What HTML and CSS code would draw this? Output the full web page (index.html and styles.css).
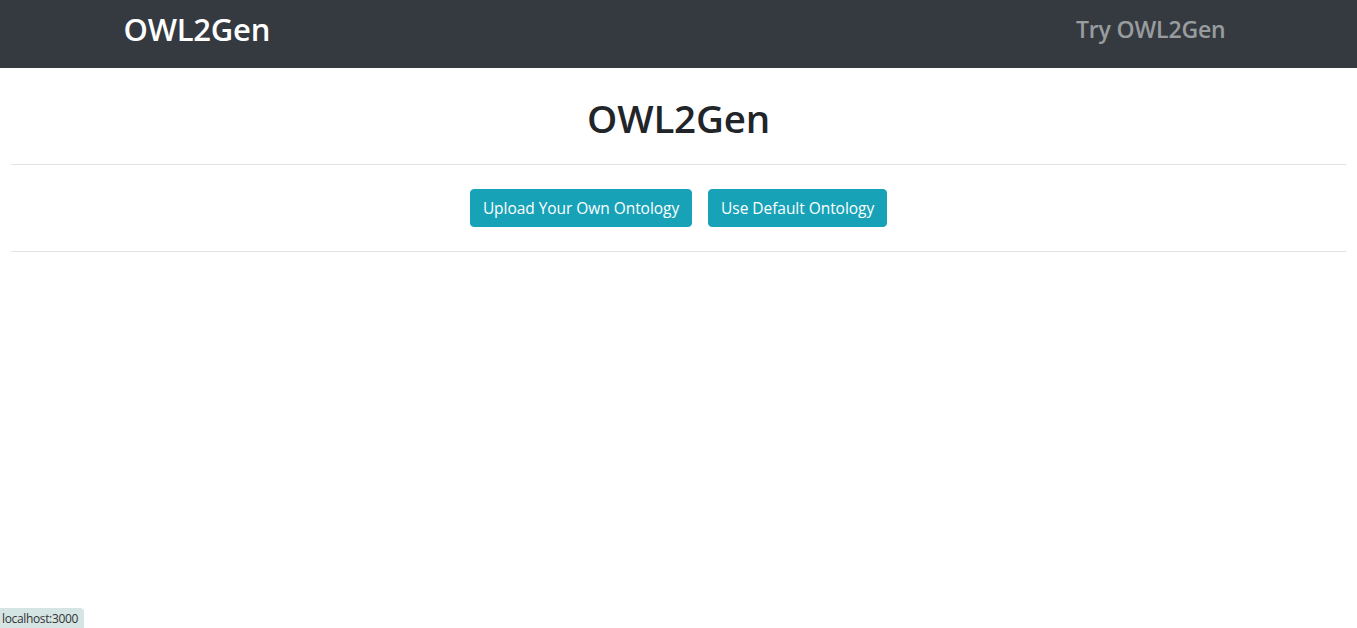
FILE: index.html
```html
<!DOCTYPE html>
<html lang="en">
<head>
<meta charset="utf-8">
<title>OWL2Gen</title>
<link rel="stylesheet" href="styles.css">
</head>
<body>
<nav class="navbar">
  <div class="nav-container">
    <a class="brand" href="#">OWL2Gen</a>
    <a class="nav-link" href="#">Try OWL2Gen</a>
  </div>
</nav>
<main class="main">
  <h1 class="title">OWL2Gen</h1>
  <hr class="rule">
  <div class="actions">
    <button class="btn">Upload Your Own Ontology</button>
    <button class="btn">Use Default Ontology</button>
  </div>
  <hr class="rule">
</main>
<div class="status">localhost:3000</div>
</body>
</html>
```

FILE: styles.css
```css
* { box-sizing: border-box; }
html, body { margin: 0; padding: 0; }
body {
  font-family: "Open Sans", "Noto Sans", "Liberation Sans", sans-serif;
  color: #212529;
  background: #fff;
  width: 1357px;
  height: 628px;
  overflow: hidden;
}
.navbar {
  background: #343a40;
  height: 68px;
}
.nav-container {
  width: 1140px;
  margin: 0 auto;
  padding: 0 15px;
  height: 100%;
  display: flex;
  align-items: center;
  justify-content: space-between;
}
.brand {
  color: #fff;
  text-decoration: none;
  font-size: 31px;
  font-weight: 600;
  letter-spacing: -0.25px;
  margin-top: -10px;
}
.nav-link {
  color: rgba(255,255,255,.5);
  text-decoration: none;
  font-size: 23px;
  font-weight: 600;
  padding-right: 8px;
  letter-spacing: -0.15px;
  margin-top: -10px;
}
.main {
  padding: 0 11px;
}
.title {
  margin: 26px 0 0;
  height: 48px;
  line-height: 48px;
  text-align: center;
  font-size: 38.5px;
  font-weight: 600;
  letter-spacing: -0.2px;
}
.rule {
  margin: 0;
  border: 0;
  border-top: 1px solid #e3e3e3;
}
.title + .rule { margin-top: 22px; }
.actions {
  display: flex;
  justify-content: center;
  gap: 16px;
  padding: 24px 0;
}
.btn {
  font-family: inherit;
  font-size: 15.5px;
  height: 38px;
  padding: 0 12px;
  color: #fff;
  background: #17a2b8;
  border: 1px solid #17a2b8;
  border-radius: 4px;
  letter-spacing: -0.05px;
}
.status {
  position: fixed;
  left: 0;
  bottom: 0;
  height: 20px;
  padding: 0 6px 0 2px;
  background: #d5e5e3;
  border-top-right-radius: 4px;
  font-size: 12px;
  line-height: 22px;
  color: #333;
  font-family: "Open Sans", sans-serif;
  letter-spacing: -0.35px;
}
```
